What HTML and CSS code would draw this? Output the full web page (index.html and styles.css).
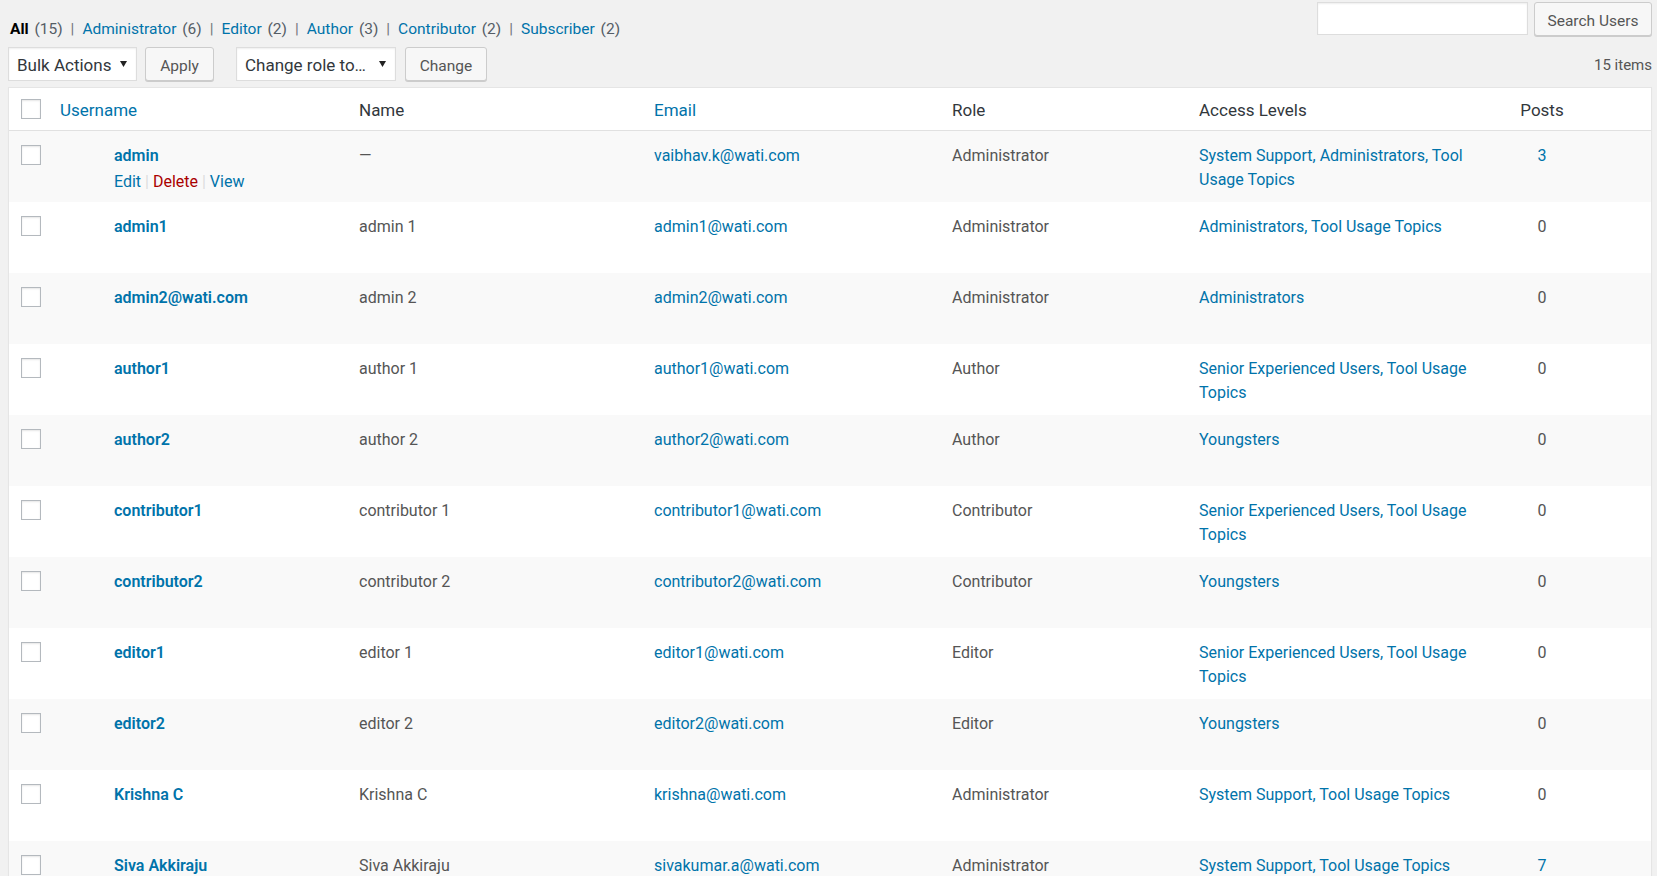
FILE: index.html
```html
<!DOCTYPE html>
<html lang="en">
<head>
<meta charset="utf-8">
<title>Users</title>
<link rel="stylesheet" href="styles.css">
</head>
<body>
<div class="wrap">
  <div class="topbar">
    <ul class="subsubsub">
      <li><a class="current" href="#">All <span class="count">(15)</span></a><span class="sep">|</span></li>
      <li><a href="#">Administrator <span class="count">(6)</span></a><span class="sep">|</span></li>
      <li><a href="#">Editor <span class="count">(2)</span></a><span class="sep">|</span></li>
      <li><a href="#">Author <span class="count">(3)</span></a><span class="sep">|</span></li>
      <li><a href="#">Contributor <span class="count">(2)</span></a><span class="sep">|</span></li>
      <li><a href="#">Subscriber <span class="count">(2)</span></a></li>
    </ul>
    <div class="search-box">
      <input class="search-input" type="search" aria-label="Search Users">
      <button class="button btn-search" type="button">Search Users</button>
    </div>
  </div>

  <div class="tablenav">
    <div class="select select-bulk"><span>Bulk Actions</span><svg class="caret" width="7" height="6" viewBox="0 0 7 6"><path d="M0 0H7L3.5 6Z" fill="#222"/></svg></div>
    <button class="button btn-apply" type="button">Apply</button>
    <div class="select select-role"><span>Change role to…</span><svg class="caret" width="7" height="6" viewBox="0 0 7 6"><path d="M0 0H7L3.5 6Z" fill="#222"/></svg></div>
    <button class="button btn-change" type="button">Change</button>
    <div class="displaying-num">15 items</div>
  </div>

  <table class="users-table">
    <colgroup>
      <col class="c-cb">
      <col class="c-username">
      <col class="c-name">
      <col class="c-email">
      <col class="c-role">
      <col class="c-access">
      <col class="c-posts">
      <col class="c-extra">
    </colgroup>
    <thead>
      <tr>
        <th class="check-column"><span class="checkbox"></span></th>
        <th><a href="#">Username</a></th>
        <th>Name</th>
        <th><a href="#">Email</a></th>
        <th>Role</th>
        <th>Access Levels</th>
        <th class="num">Posts</th>
        <th></th>
      </tr>
    </thead>
    <tbody>
      <tr>
        <th class="check-column"><span class="checkbox"></span></th>
        <td class="username"><strong><a href="#">admin</a></strong>
          <div class="row-actions visible"><a href="#">Edit</a><span class="rsep"> | </span><a class="delete" href="#">Delete</a><span class="rsep"> | </span><a href="#">View</a></div></td>
        <td>—</td>
        <td><a href="#">vaibhav.k@wati.com</a></td>
        <td>Administrator</td>
        <td><a href="#">System Support, Administrators, Tool Usage Topics</a></td>
        <td class="num"><a href="#">3</a></td>
        <td></td>
      </tr>
      <tr>
        <th class="check-column"><span class="checkbox"></span></th>
        <td class="username"><strong><a href="#">admin1</a></strong>
          <div class="row-actions"><a href="#">Edit</a><span class="rsep"> | </span><a class="delete" href="#">Delete</a><span class="rsep"> | </span><a href="#">View</a></div></td>
        <td>admin 1</td>
        <td><a href="#">admin1@wati.com</a></td>
        <td>Administrator</td>
        <td><a href="#">Administrators, Tool Usage Topics</a></td>
        <td class="num">0</td>
        <td></td>
      </tr>
      <tr>
        <th class="check-column"><span class="checkbox"></span></th>
        <td class="username"><strong><a href="#">admin2@wati.com</a></strong>
          <div class="row-actions"><a href="#">Edit</a><span class="rsep"> | </span><a class="delete" href="#">Delete</a><span class="rsep"> | </span><a href="#">View</a></div></td>
        <td>admin 2</td>
        <td><a href="#">admin2@wati.com</a></td>
        <td>Administrator</td>
        <td><a href="#">Administrators</a></td>
        <td class="num">0</td>
        <td></td>
      </tr>
      <tr>
        <th class="check-column"><span class="checkbox"></span></th>
        <td class="username"><strong><a href="#">author1</a></strong>
          <div class="row-actions"><a href="#">Edit</a><span class="rsep"> | </span><a class="delete" href="#">Delete</a><span class="rsep"> | </span><a href="#">View</a></div></td>
        <td>author 1</td>
        <td><a href="#">author1@wati.com</a></td>
        <td>Author</td>
        <td><a href="#">Senior Experienced Users, Tool Usage Topics</a></td>
        <td class="num">0</td>
        <td></td>
      </tr>
      <tr>
        <th class="check-column"><span class="checkbox"></span></th>
        <td class="username"><strong><a href="#">author2</a></strong>
          <div class="row-actions"><a href="#">Edit</a><span class="rsep"> | </span><a class="delete" href="#">Delete</a><span class="rsep"> | </span><a href="#">View</a></div></td>
        <td>author 2</td>
        <td><a href="#">author2@wati.com</a></td>
        <td>Author</td>
        <td><a href="#">Youngsters</a></td>
        <td class="num">0</td>
        <td></td>
      </tr>
      <tr>
        <th class="check-column"><span class="checkbox"></span></th>
        <td class="username"><strong><a href="#">contributor1</a></strong>
          <div class="row-actions"><a href="#">Edit</a><span class="rsep"> | </span><a class="delete" href="#">Delete</a><span class="rsep"> | </span><a href="#">View</a></div></td>
        <td>contributor 1</td>
        <td><a href="#">contributor1@wati.com</a></td>
        <td>Contributor</td>
        <td><a href="#">Senior Experienced Users, Tool Usage Topics</a></td>
        <td class="num">0</td>
        <td></td>
      </tr>
      <tr>
        <th class="check-column"><span class="checkbox"></span></th>
        <td class="username"><strong><a href="#">contributor2</a></strong>
          <div class="row-actions"><a href="#">Edit</a><span class="rsep"> | </span><a class="delete" href="#">Delete</a><span class="rsep"> | </span><a href="#">View</a></div></td>
        <td>contributor 2</td>
        <td><a href="#">contributor2@wati.com</a></td>
        <td>Contributor</td>
        <td><a href="#">Youngsters</a></td>
        <td class="num">0</td>
        <td></td>
      </tr>
      <tr>
        <th class="check-column"><span class="checkbox"></span></th>
        <td class="username"><strong><a href="#">editor1</a></strong>
          <div class="row-actions"><a href="#">Edit</a><span class="rsep"> | </span><a class="delete" href="#">Delete</a><span class="rsep"> | </span><a href="#">View</a></div></td>
        <td>editor 1</td>
        <td><a href="#">editor1@wati.com</a></td>
        <td>Editor</td>
        <td><a href="#">Senior Experienced Users, Tool Usage Topics</a></td>
        <td class="num">0</td>
        <td></td>
      </tr>
      <tr>
        <th class="check-column"><span class="checkbox"></span></th>
        <td class="username"><strong><a href="#">editor2</a></strong>
          <div class="row-actions"><a href="#">Edit</a><span class="rsep"> | </span><a class="delete" href="#">Delete</a><span class="rsep"> | </span><a href="#">View</a></div></td>
        <td>editor 2</td>
        <td><a href="#">editor2@wati.com</a></td>
        <td>Editor</td>
        <td><a href="#">Youngsters</a></td>
        <td class="num">0</td>
        <td></td>
      </tr>
      <tr>
        <th class="check-column"><span class="checkbox"></span></th>
        <td class="username"><strong><a href="#">Krishna C</a></strong>
          <div class="row-actions"><a href="#">Edit</a><span class="rsep"> | </span><a class="delete" href="#">Delete</a><span class="rsep"> | </span><a href="#">View</a></div></td>
        <td>Krishna C</td>
        <td><a href="#">krishna@wati.com</a></td>
        <td>Administrator</td>
        <td><a href="#">System Support, Tool Usage Topics</a></td>
        <td class="num">0</td>
        <td></td>
      </tr>
      <tr>
        <th class="check-column"><span class="checkbox"></span></th>
        <td class="username"><strong><a href="#">Siva Akkiraju</a></strong>
          <div class="row-actions"><a href="#">Edit</a><span class="rsep"> | </span><a class="delete" href="#">Delete</a><span class="rsep"> | </span><a href="#">View</a></div></td>
        <td>Siva Akkiraju</td>
        <td><a href="#">sivakumar.a@wati.com</a></td>
        <td>Administrator</td>
        <td><a href="#">System Support, Tool Usage Topics</a></td>
        <td class="num"><a href="#">7</a></td>
        <td></td>
      </tr>
    </tbody>
  </table>
</div>
</body>
</html>
```

FILE: styles.css
```css
html, body {
  margin: 0;
  height: 100%;
  overflow: hidden;
}

body {
  background: #f1f1f1;
  font-family: Roboto, "Open Sans", "Liberation Sans", sans-serif;
  font-size: 16px;
  color: #555;
}

a {
  color: #0073aa;
  text-decoration: none;
}

.wrap {
  padding: 2px 5px 0 8px;
}

/* top bar */
.topbar {
  display: flex;
  justify-content: space-between;
  align-items: flex-start;
}

.subsubsub {
  display: flex;
  list-style: none;
  margin: 15px 0 0 2px;
  padding: 0;
  font-size: 15.5px;
  line-height: 24px;
  color: #72777c;
  white-space: nowrap;
}

.subsubsub .count {
  color: #555d66;
  margin-left: 2px;
}

.subsubsub .current {
  color: #000;
  font-weight: 700;
}

.subsubsub .current .count {
  font-weight: 400;
}

.subsubsub .sep {
  margin: 0 8px;
  color: #72777c;
}

.search-box {
  display: flex;
  gap: 6px;
}

.search-input {
  width: 211px;
  height: 33px;
  box-sizing: border-box;
  margin: 0;
  border: 1px solid #ddd;
  background: #fff;
  box-shadow: inset 0 1px 2px rgba(0, 0, 0, 0.07);
}

.button {
  box-sizing: border-box;
  height: 34px;
  margin: 0;
  padding: 4px 0 0;
  border: 1px solid #ccc;
  border-radius: 3px;
  background: #f7f7f7;
  box-shadow: 0 1px 0 #ccc;
  color: #555;
  font-family: inherit;
  font-size: 15.5px;
  display: flex;
  align-items: center;
  justify-content: center;
}

.btn-search { width: 118px; }
.btn-apply { width: 69px; margin-left: 8px; }
.btn-change { width: 82px; margin-left: 9px; }

/* tablenav */
.tablenav {
  display: flex;
  align-items: center;
  height: 34px;
  margin-top: 6px;
}

.select {
  box-sizing: border-box;
  height: 34px;
  display: flex;
  align-items: center;
  justify-content: space-between;
  padding: 2px 9px 0 8px;
  border: 1px solid #ddd;
  background: #fff;
  box-shadow: inset 0 1px 2px rgba(0, 0, 0, 0.07);
  color: #32373c;
  font-size: 17px;
}

.select-bulk { width: 129px; }
.select-role { width: 160px; margin-left: 22px; }

.caret {
  flex: none;
  margin-top: -3px;
}

.displaying-num {
  margin-left: auto;
  padding-top: 2px;
  font-size: 15px;
  color: #555;
}

/* table */
.users-table {
  width: 100%;
  margin-top: 6px;
  table-layout: fixed;
  border-collapse: separate;
  border-spacing: 0;
  border: 1px solid #e5e5e5;
  background: #fff;
  box-shadow: 0 1px 1px rgba(0, 0, 0, 0.04);
}

.c-cb { width: 39px; }
.c-username { width: 299px; }
.c-name { width: 295px; }
.c-email { width: 298px; }
.c-role { width: 247px; }
.c-access { width: 296px; }
.c-posts { width: 118px; }
.c-extra { width: 50px; }

.users-table thead th {
  text-align: left;
  font-weight: 400;
  font-size: 17px;
  line-height: 24px;
  color: #32373c;
  padding: 10px 12px 8px;
  border-bottom: 1px solid #e1e1e1;
  vertical-align: top;
}

.users-table td {
  padding: 13px 12px 8px;
  line-height: 24px;
  vertical-align: top;
  color: #555;
}

.users-table tbody tr:nth-child(odd) {
  background: #f9f9f9;
}

.users-table .check-column {
  padding: 14px 0 0 12px;
  vertical-align: top;
  text-align: left;
}

.users-table thead .check-column {
  padding: 11px 0 0 12px;
}

.users-table .num {
  text-align: center;
}

.checkbox {
  display: block;
  width: 20px;
  height: 20px;
  box-sizing: border-box;
  border: 1px solid #b4b9be;
  background: #fff;
  box-shadow: inset 0 1px 2px rgba(0, 0, 0, 0.1);
}

.users-table td.username {
  padding-left: 66px;
}

.username strong a {
  font-weight: 600;
}

.row-actions {
  padding-top: 2px;
  line-height: 24px;
  visibility: hidden;
}

.row-actions.visible {
  visibility: visible;
}

.row-actions .rsep {
  color: #ddd;
}

.row-actions .delete {
  color: #a00;
}
```
